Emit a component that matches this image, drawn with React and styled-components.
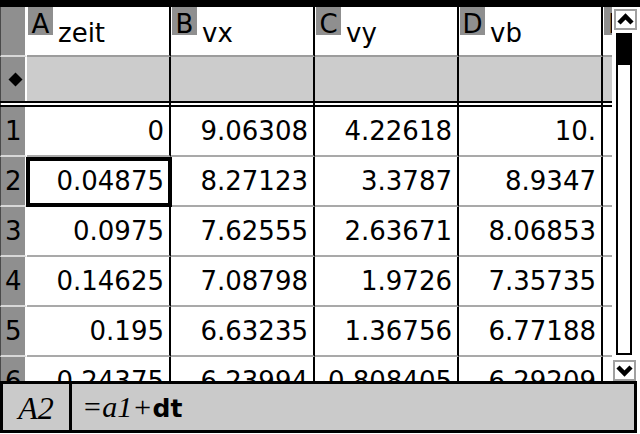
import React from 'react';
import styled, { createGlobalStyle } from 'styled-components';

const GlobalStyle = createGlobalStyle`
  html, body {
    margin: 0;
    padding: 0;
    background: #fff;
    overflow: hidden;
  }
  * {
    box-sizing: content-box;
  }
`;

const Screen = styled.div`
  width: 640px;
  height: 434px;
  background: #fff;
  display: flex;
  flex-direction: column;
  font-family: "DejaVu Sans", Verdana, sans-serif;
  color: #000;
  overflow: hidden;
`;

const TopBar = styled.div`
  height: 7px;
  background: #000;
  flex: none;
`;

const Main = styled.div`
  height: 374px;
  display: flex;
  overflow: hidden;
  flex: none;
`;

const Sheet = styled.div`
  width: 612px;
  display: flex;
  flex-direction: column;
  overflow: hidden;
`;

const Row = styled.div`
  display: flex;
  flex: none;
  ${({ $kind }) => $kind === 'divider' && `
    border-top: 2px solid #000;
    border-bottom: 2px solid #000;
  `}
`;

const rowHeight = { header: 48, formula: 44, divider: 2, data: 48 };
const lineColor = { header: '#9c9c9c', data: '#a9a9a9' };

const RowHead = styled.div`
  width: 24px;
  height: ${({ $kind }) => rowHeight[$kind]}px;
  background: ${({ $kind }) => ($kind === 'divider' ? '#fff' : '#8f8f8f')};
  border-left: 1px solid #4a4a4a;
  border-right: 2px solid #fff;
  border-bottom: ${({ $kind }) => (lineColor[$kind] ? '2px solid #d8d8d8' : 'none')};
  display: flex;
  align-items: center;
  font-size: 26px;
  line-height: 1;
  flex: none;
`;

const RowNum = styled.span`
  padding-left: 4px;
`;

const Cell = styled.div`
  position: relative;
  width: ${({ $narrow }) => ($narrow ? 9 : 142)}px;
  height: ${({ $kind }) => rowHeight[$kind]}px;
  background: ${({ $kind }) => ($kind === 'formula' ? '#cccccc' : '#fff')};
  border-right: ${({ $narrow }) => ($narrow ? 'none' : '2px solid #000')};
  border-bottom: ${({ $kind }) => (lineColor[$kind] ? `2px solid ${lineColor[$kind]}` : 'none')};
  display: flex;
  align-items: center;
  justify-content: flex-end;
  font-size: 26px;
  line-height: 1;
  white-space: nowrap;
  overflow: ${({ $narrow }) => ($narrow ? 'hidden' : 'visible')};
  flex: none;

  ${({ $selected }) => $selected && `
    &::after {
      content: '';
      position: absolute;
      top: 0;
      left: -1px;
      right: -3px;
      bottom: -2px;
      border: 4px solid #000;
      z-index: 1;
    }
  `}
`;

const Value = styled.span`
  padding-right: 5px;
`;

const HeaderCell = styled(Cell)`
  align-items: flex-start;
  justify-content: flex-start;
`;

const ColLetter = styled.div`
  width: 25px;
  height: 28px;
  margin-left: 1px;
  background: #8f8f8f;
  text-align: center;
  font-size: 26px;
  line-height: 34px;
  flex: none;
`;

const ColName = styled.div`
  margin-left: 5px;
  margin-top: 11px;
  font-size: 26px;
  line-height: 30px;
`;

const Scrollbar = styled.div`
  width: 28px;
  display: flex;
  flex-direction: column;
  align-items: flex-start;
  padding-top: 2px;
  background: #fff;
`;

const ArrowButton = styled.div`
  width: 19px;
  height: 17px;
  margin-left: ${({ $down }) => ($down ? 1 : 2)}px;
  margin-top: ${({ $down }) => ($down ? 5 : 0)}px;
  border: 2px solid #a0a0a0;
  display: flex;
  align-items: center;
  justify-content: center;
  background: #fff;
`;

const Track = styled.div`
  width: 12px;
  height: 320px;
  margin-left: 4px;
  margin-top: 3px;
  border: 2px solid #000;
  border-top: none;
  background: #fff;
`;

const Thumb = styled.div`
  height: 32px;
  margin: 0 -2px;
  background: #000;
`;

const FormulaBar = styled.div`
  width: 631px;
  height: 46px;
  border: 3px solid #000;
  background: #cacaca;
  display: flex;
  align-items: center;
  flex: none;
`;

const CellRef = styled.div`
  width: 69px;
  height: 100%;
  border-right: 3px solid #000;
  display: flex;
  align-items: center;
  justify-content: center;
  font-family: "Liberation Serif", "Times New Roman", serif;
  font-style: italic;
  font-size: 32px;
  padding-top: 2px;
  box-sizing: border-box;
`;

const Formula = styled.div`
  padding-left: 10px;
  display: flex;
  align-items: baseline;
  white-space: pre;
`;

const Italic = styled.span`
  font-family: "Liberation Serif", "Times New Roman", serif;
  font-style: italic;
  font-size: 30px;
`;

const Bold = styled.span`
  font-family: "DejaVu Sans", sans-serif;
  font-weight: bold;
  font-size: 25px;
`;

const columns = [
  { letter: 'A', name: 'zeit' },
  { letter: 'B', name: 'vx' },
  { letter: 'C', name: 'vy' },
  { letter: 'D', name: 'vb' },
];

const data = [
  ['0', '9.06308', '4.22618', '10.'],
  ['0.04875', '8.27123', '3.3787', '8.9347'],
  ['0.0975', '7.62555', '2.63671', '8.06853'],
  ['0.14625', '7.08798', '1.9726', '7.35735'],
  ['0.195', '6.63235', '1.36756', '6.77188'],
  ['0.24375', '6.23994', '0.808405', '6.29209'],
];

const Chevron = ({ down }) => (
  <svg width="17" height="13" viewBox="0 0 17 13">
    <polyline
      points={down ? '2,3 8.5,9.5 15,3' : '2,10 8.5,3.5 15,10'}
      fill="none"
      stroke="#000"
      strokeWidth="4.5"
      strokeLinejoin="miter"
    />
  </svg>
);

const Diamond = () => (
  <svg width="15" height="15" viewBox="0 0 15 15" style={{ marginLeft: 7 }}>
    <polygon points="7.5,0.5 14.5,7.5 7.5,14.5 0.5,7.5" fill="#000" />
  </svg>
);

const App = () => (
  <Screen>
    <GlobalStyle />
    <TopBar />
    <Main>
      <Sheet>
        <Row $kind="header">
          <RowHead $kind="header" />
          {columns.map((c) => (
            <HeaderCell key={c.letter} $kind="header">
              <ColLetter>{c.letter}</ColLetter>
              <ColName>{c.name}</ColName>
            </HeaderCell>
          ))}
          <HeaderCell $kind="header" $narrow>
            <ColLetter>E</ColLetter>
          </HeaderCell>
        </Row>
        <Row $kind="formula">
          <RowHead $kind="formula">
            <Diamond />
          </RowHead>
          {columns.map((c) => (
            <Cell key={c.letter} $kind="formula" />
          ))}
          <Cell $kind="formula" $narrow />
        </Row>
        <Row $kind="divider">
          <RowHead $kind="divider" />
          {columns.map((c) => (
            <Cell key={c.letter} $kind="divider" />
          ))}
          <Cell $kind="divider" $narrow />
        </Row>
        {data.map((row, i) => (
          <Row key={i} $kind="data">
            <RowHead $kind="data">
              <RowNum>{i + 1}</RowNum>
            </RowHead>
            {row.map((v, j) => (
              <Cell key={j} $kind="data" $selected={i === 1 && j === 0}>
                <Value>{v}</Value>
              </Cell>
            ))}
            <Cell $kind="data" $narrow />
          </Row>
        ))}
      </Sheet>
      <Scrollbar>
        <ArrowButton>
          <Chevron />
        </ArrowButton>
        <Track>
          <Thumb />
        </Track>
        <ArrowButton $down>
          <Chevron down />
        </ArrowButton>
      </Scrollbar>
    </Main>
    <FormulaBar>
      <CellRef>A2</CellRef>
      <Formula>
        <Italic>=a1+</Italic>
        <Bold>dt</Bold>
      </Formula>
    </FormulaBar>
  </Screen>
);

export default App;
